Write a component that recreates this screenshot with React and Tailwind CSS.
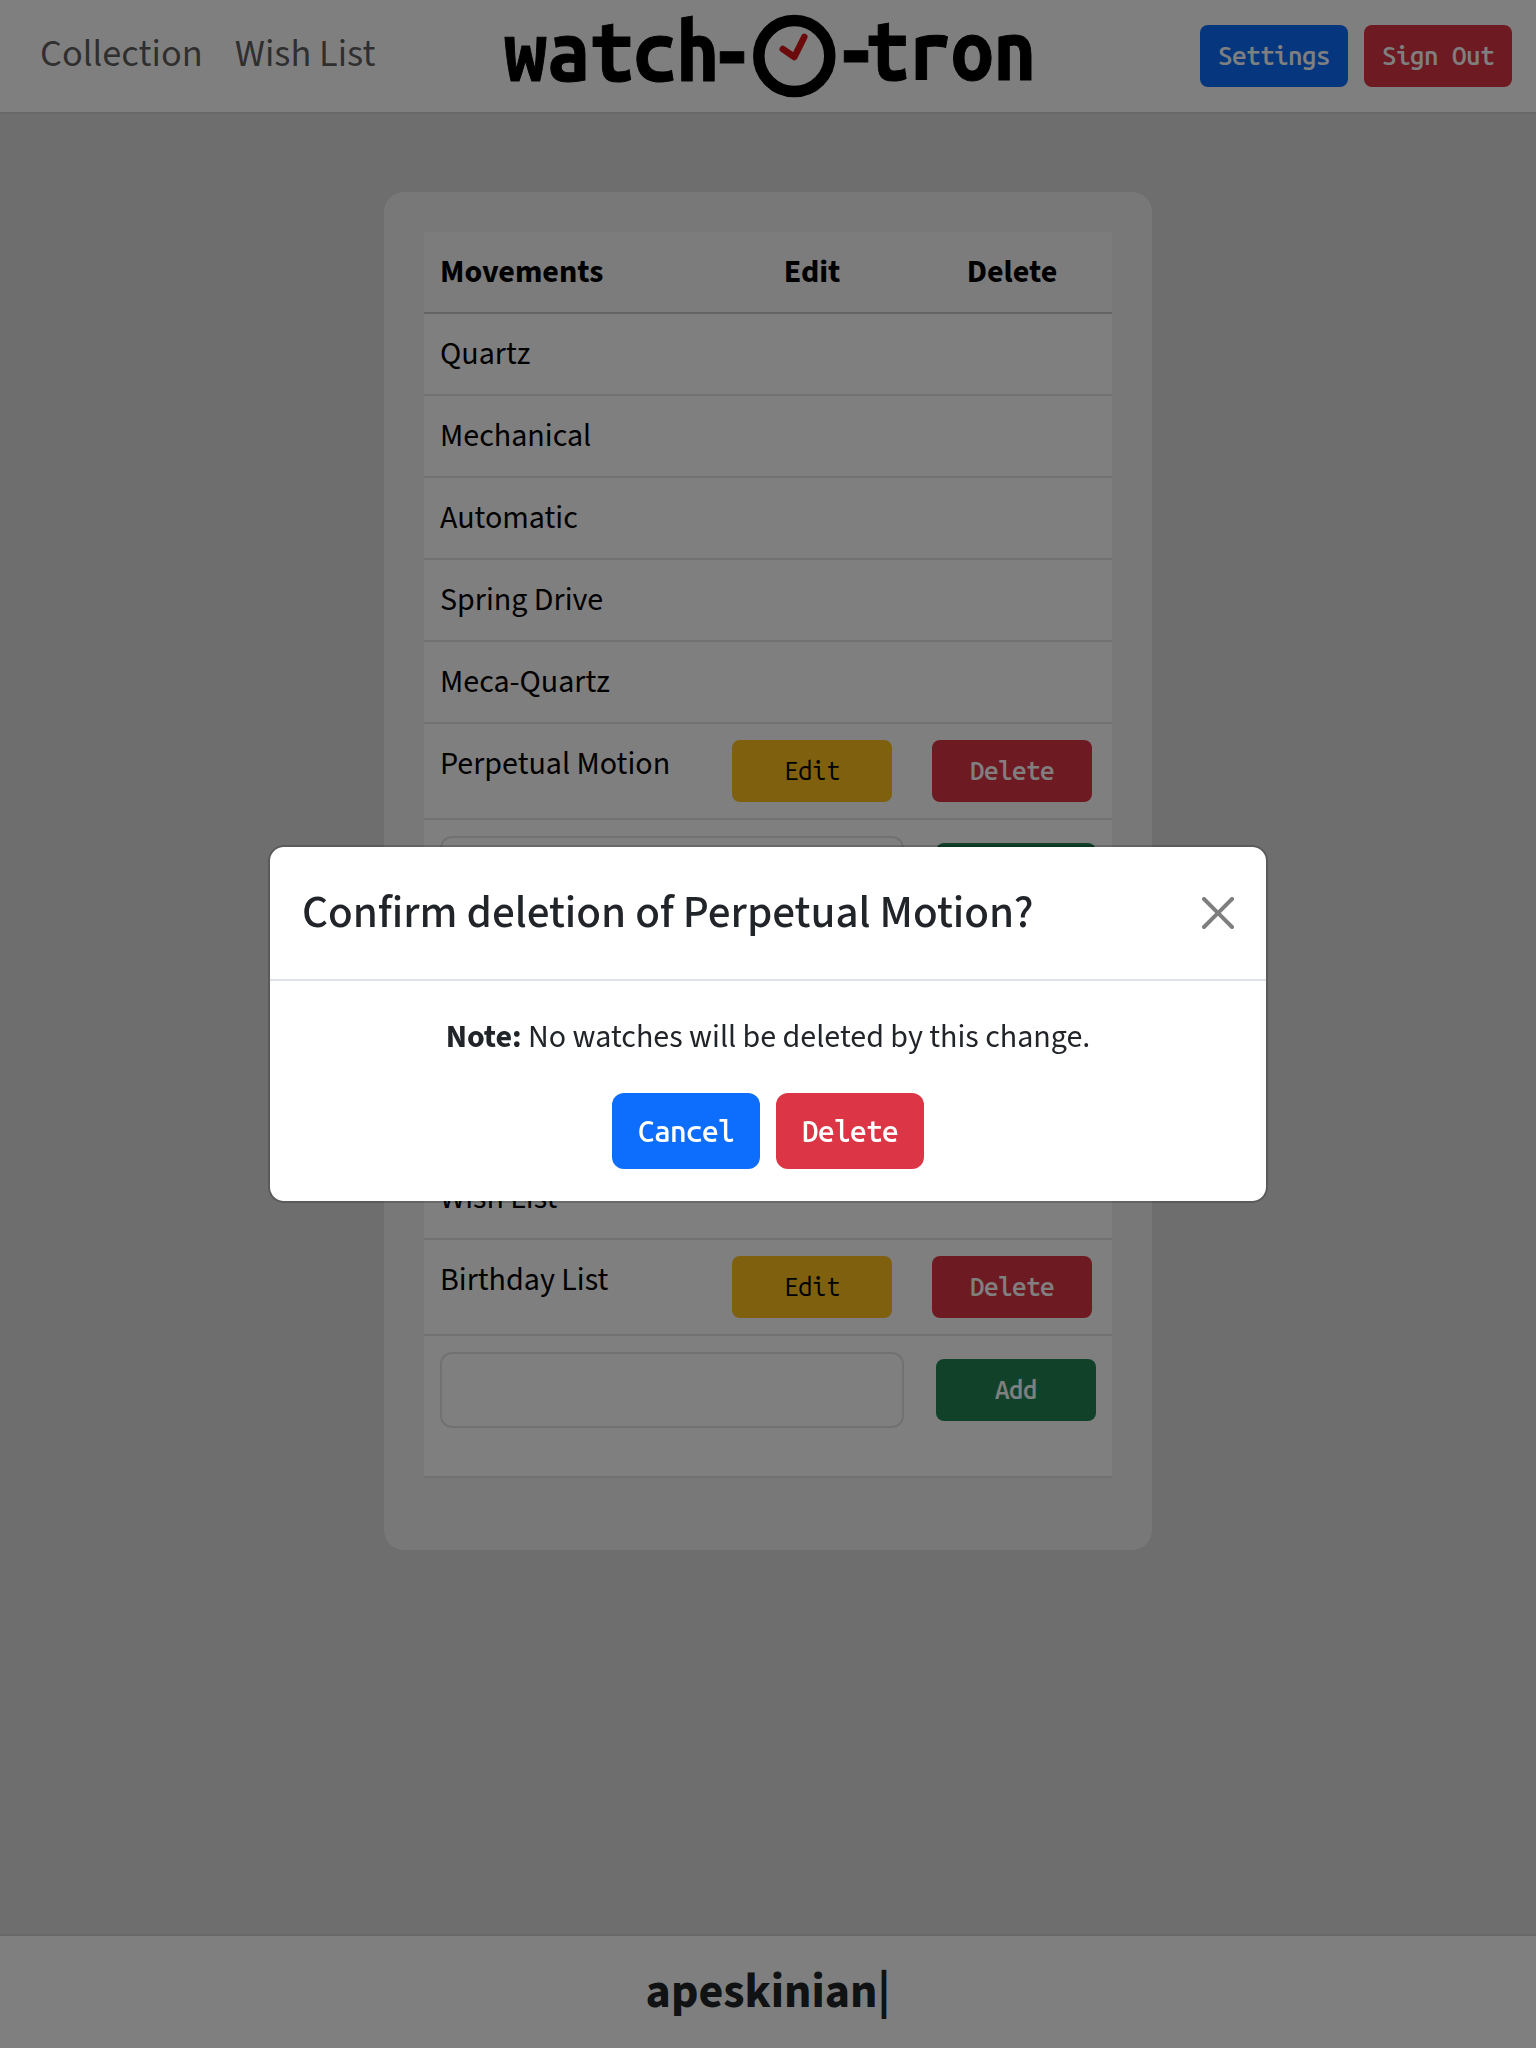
import React from "react";

const MONO = "font-['Ubuntu_Mono','Ubuntu_Sans_Mono','Noto_Sans_Mono_CJK_JP',monospace]";

function SmallButton({ className, children }) {
  return (
    <button className={`${MONO} h-[62px] rounded-lg py-[10px] text-[26px] leading-[42px] tracking-[-0.0215em] whitespace-nowrap ${className}`}>
      {children}
    </button>
  );
}

function ModalButton({ className, children }) {
  return (
    <button className={`${MONO} h-[76px] w-[148px] rounded-xl py-[14px] text-[29.7px] leading-[48px] font-medium tracking-[-0.0215em] text-white ${className}`}>
      {children}
    </button>
  );
}

function Logo() {
  return (
    <svg className="h-28 w-[560px]" viewBox="-2 0 560 112" role="img" aria-label="watch-O-tron">
      <g fill="#000" stroke="#000" strokeWidth="1" fontSize="84" fontWeight="700" className={MONO}>
        <text transform="translate(14 80.500) scale(.915 1)">watch</text>
        <text transform="translate(242 80.500) scale(.915 1)" textAnchor="middle">-</text>
        <text transform="translate(366 80) scale(.915 1)" textAnchor="middle">-</text>
        <text transform="translate(376 80) scale(.904 1)">tron</text>
      </g>
      <circle cx="304.3" cy="56" r="35.5" fill="none" stroke="#000" strokeWidth="11.5" />
      <path d="M292.800 49L304.300 57L314.300 37" fill="none" stroke="#d61317" strokeWidth="6.500" strokeLinecap="round" strokeLinejoin="round" />
    </svg>
  );
}

function ItemRow({ name, editable }) {
  return (
    <div className="grid grid-cols-[288px_200px_200px] border-b-2 border-[#dee2e6] bg-white py-4">
      <div className="px-4">{name}</div>
      {editable && (
        <>
          <div className="flex justify-center">
            <SmallButton className="w-40 bg-[#fec01d] font-normal text-black">Edit</SmallButton>
          </div>
          <div className="flex justify-center">
            <SmallButton className="w-40 bg-[#dc3545] font-medium text-white">Delete</SmallButton>
          </div>
        </>
      )}
    </div>
  );
}

function SettingsTable({ title, items }) {
  return (
    <section className="mb-8 text-[32px] leading-[48px] text-black">
      <div className="grid grid-cols-[288px_200px_200px] border-b-2 border-[#c8c8c8] bg-[#f9f9f9] py-4 font-bold">
        <div className="px-4">{title}</div>
        <div className="text-center">Edit</div>
        <div className="text-center">Delete</div>
      </div>
      {items.map((item) => (
        <ItemRow key={item.name} {...item} />
      ))}
      <div className="flex h-[142px] items-start gap-8 border-b-2 border-[#dee2e6] bg-white p-4">
        <input className="h-[76px] w-[464px] rounded-xl border-2 border-[#dee2e6] bg-white px-6" />
        <SmallButton className="mt-[7px] w-40 bg-[#238553] font-medium text-white">Add</SmallButton>
      </div>
    </section>
  );
}

const movements = [
  { name: "Quartz" },
  { name: "Mechanical" },
  { name: "Automatic" },
  { name: "Spring Drive" },
  { name: "Meca-Quartz" },
  { name: "Perpetual Motion", editable: true },
];

const lists = [{ name: "Collection" }, { name: "Wish List" }, { name: "Birthday List", editable: true }];

function ConfirmModal() {
  return (
    <div className="fixed inset-0 flex items-center justify-center bg-black/50">
      <div className="w-[1000px] rounded-2xl border-2 border-black/[0.175] bg-white bg-clip-padding text-[#212529]">
        <div className="flex items-center justify-between border-b-2 border-[#dee2e6] p-8">
          <h4 className="text-[45.408px] leading-[68px] font-medium">Confirm deletion of Perpetual Motion?</h4>
          <button aria-label="Close" className="opacity-50">
            <svg className="h-8 w-8" viewBox="0 0 16 16" fill="#000">
              <path d="M.293.293a1 1 0 0 1 1.414 0L8 6.586 14.293.293a1 1 0 1 1 1.414 1.414L9.414 8l6.293 6.293a1 1 0 0 1-1.414 1.414L8 9.414l-6.293 6.293a1 1 0 0 1-1.414-1.414L6.586 8 .293 1.707a1 1 0 0 1 0-1.414z" />
            </svg>
          </button>
        </div>
        <div className="p-8 text-center text-[32px] leading-[48px]">
          <p className="mb-8">
            <b className="font-bold">Note:</b> No watches will be deleted by this change.
          </p>
          <div className="flex justify-center gap-4">
            <ModalButton className="bg-[#0d6efd]">Cancel</ModalButton>
            <ModalButton className="bg-[#dc3545]">Delete</ModalButton>
          </div>
        </div>
      </div>
    </div>
  );
}

export default function App() {
  return (
    <div className="flex h-[2048px] flex-col overflow-hidden bg-[#dcdcdc] font-['Source_Sans_3','Noto_Sans_CJK_SC',sans-serif]">
      <header className="grid h-[114px] grid-cols-[1fr_560px_1fr] items-center border-b-2 border-[#d0d0d0] bg-white px-6">
        <nav className="flex gap-8 pb-0.5 pl-4 text-[38.4px] leading-[57.6px] text-black/65">
          <a className="whitespace-nowrap">Collection</a>
          <a className="whitespace-nowrap">Wish List</a>
        </nav>
        <Logo />
        <div className="flex justify-end gap-4">
          <SmallButton className="w-[148px] bg-[#0d6efd] font-medium text-white">Settings</SmallButton>
          <SmallButton className="w-[148px] bg-[#dc3545] font-medium text-white">Sign Out</SmallButton>
        </div>
      </header>
      <main className="flex flex-1 items-start justify-center pt-[78px]">
        <div className="w-[768px] rounded-[20px] bg-[#f0f0f0] p-10">
          <SettingsTable title="Movements" items={movements} />
          <SettingsTable title="Lists" items={lists} />
        </div>
      </main>
      <footer className="flex h-[114px] items-center justify-center border-t-2 border-[#d0d0d0] bg-white text-5xl font-bold text-[#212529]">
        apeskinian|
      </footer>
      <ConfirmModal />
    </div>
  );
}
